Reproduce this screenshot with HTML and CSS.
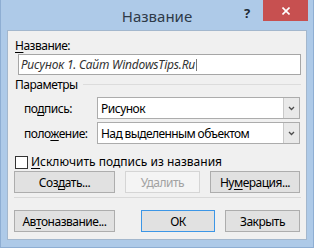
FILE: index.html
```html
<!DOCTYPE html>
<html lang="ru">
<head>
<meta charset="utf-8">
<title>Название</title>
<link rel="stylesheet" href="styles.css">
</head>
<body>
<div class="window">
  <div class="titlebar">
    <div class="title">Название</div>
    <div class="controls">
      <div class="help">?</div>
      <div class="close">
        <svg width="8" height="8" viewBox="0 0 8 8"><path d="M0.5 0.5 L7.5 7.5 M7.5 0.5 L0.5 7.5" stroke="#fff" stroke-width="1.6" fill="none"/></svg>
      </div>
    </div>
  </div>
  <div class="panel">
    <div class="lbl-top"><u>Н</u>азвание:</div>
    <div class="input"><span class="itext">Рисунок 1. Сайт WindowsTips.Ru</span><span class="caret"></span></div>
    <div class="group"><span class="group-name">Параметры</span><span class="group-line"></span></div>
    <div class="fields">
      <span class="flabel">по<u>д</u>пись:</span>
      <div class="select"><span class="sval">Рисунок</span><span class="arrow"><svg width="7" height="5" viewBox="0 0 7 5"><path d="M1 1 L3.5 3.5 L6 1" stroke="#4d4d4d" stroke-width="1.3" fill="none"/></svg></span></div>
      <span class="flabel">поло<u>ж</u>ение:</span>
      <div class="select"><span class="sval sval-long">Над выделенным объектом</span><span class="arrow"><svg width="7" height="5" viewBox="0 0 7 5"><path d="M1 1 L3.5 3.5 L6 1" stroke="#4d4d4d" stroke-width="1.3" fill="none"/></svg></span></div>
    </div>
    <div class="check"><span class="box"></span><span class="clabel"><u>И</u>сключить подпись из названия</span></div>
    <div class="row1">
      <div class="btn">Соз<u>д</u>ать...</div>
      <div class="btn disabled">Удалить</div>
      <div class="btn">Ну<u>м</u>ерация...</div>
    </div>
    <div class="sep"></div>
    <div class="row2">
      <div class="btn">Ав<u>т</u>оназвание...</div>
      <div class="btn default">ОК</div>
      <div class="btn">Закрыть</div>
    </div>
  </div>
</div>
</body>
</html>
```
FILE: styles.css
```css
html, body {
  margin: 0;
  padding: 0;
}
body {
  font-family: "Noto Sans", "Open Sans", sans-serif;
  font-size: 12px;
  letter-spacing: -0.5px;
  color: #000;
}
.window {
  width: 314px;
  height: 248px;
  box-sizing: border-box;
  background: #aecae8;
  border: 1px solid #8eaed3;
  border-top: none;
  display: flex;
  flex-direction: column;
  padding: 0 6px 7px 6px;
}
.titlebar {
  height: 30px;
  display: grid;
  grid-template-columns: 1fr auto 1fr;
  margin: 0 -6px;
}
.title {
  grid-column: 2;
  font-size: 15px;
  letter-spacing: 0;
  line-height: 20px;
  padding-top: 6px;
  color: #2e3a48;
}
.controls {
  grid-column: 3;
  justify-self: end;
  display: flex;
  align-items: flex-start;
  padding-right: 5px;
}
.help {
  width: 16px;
  margin-right: 8px;
  text-align: center;
  font-weight: bold;
  font-size: 13px;
  letter-spacing: 0;
  line-height: 16px;
  padding-top: 5px;
  color: #1e2a36;
}
.close {
  width: 45px;
  height: 21px;
  background: #c75050;
  display: flex;
  align-items: center;
  justify-content: center;
}
.panel {
  flex: 1;
  background: #f0f0f0;
  border: 1px solid #a3b7cd;
  padding: 7px 5px 0 6px;
  display: flex;
  flex-direction: column;
}
u {
  text-decoration: underline;
  text-underline-offset: 2px;
}
.lbl-top {
  line-height: 15px;
  margin-left: 1px;
}
.input {
  margin: 1px 0 0 4px;
  height: 21px;
  box-sizing: border-box;
  border: 1px solid #a6a6a6;
  background: #fff;
  display: flex;
  align-items: center;
  padding-left: 2px;
}
.itext {
  font-style: italic;
  letter-spacing: -0.2px;
  color: #333;
}
.caret {
  width: 1px;
  height: 12px;
  background: #777;
  margin-left: 1px;
}
.group {
  margin-top: 2px;
  display: flex;
  align-items: center;
  line-height: 15px;
  margin-left: 1px;
}
.group-line {
  flex: 1;
  height: 1px;
  background: #dcdcdc;
  margin-left: 5px;
  margin-top: -1px;
}
.fields {
  margin-top: 5px;
  display: grid;
  grid-template-columns: 83px 203px;
  grid-auto-rows: 22px;
  row-gap: 3px;
  align-items: center;
}
.flabel {
  padding-left: 10px;
}
.select {
  height: 22px;
  box-sizing: border-box;
  border: 1px solid #acacac;
  background: #fff;
  display: flex;
  align-items: center;
}
.sval {
  flex: 1;
  padding-left: 3px;
}
.sval-long {
  letter-spacing: -0.6px;
}
.arrow {
  width: 16px;
  height: 20px;
  box-sizing: border-box;
  border-left: 1px solid #c9c9c9;
  background: #e9e9e9;
  display: flex;
  align-items: center;
  justify-content: center;
}
.check {
  margin-top: 12px;
  margin-left: 1px;
  display: flex;
  align-items: center;
  height: 13px;
}
.box {
  width: 13px;
  height: 13px;
  box-sizing: border-box;
  border: 1px solid #333;
  background: #fff;
}
.clabel {
  margin-left: 3px;
  margin-top: -2px;
  letter-spacing: 0;
}
.row1, .row2 {
  display: flex;
  height: 22px;
}
.row1 {
  margin-top: 2px;
}
.row2 {
  margin-top: 12px;
}
.btn {
  height: 22px;
  box-sizing: border-box;
  border: 1px solid #adadad;
  background: #e1e1e1;
  display: flex;
  align-items: center;
  justify-content: center;
}
.row1 .btn:nth-child(1) { width: 101px; }
.row1 .btn:nth-child(2) { width: 75px; margin-left: 10px; }
.row1 .btn:nth-child(3) { width: 90px; margin-left: 10px; }
.row2 .btn:nth-child(1) { width: 101px; }
.row2 .btn:nth-child(2) { width: 74px; margin-left: 26px; }
.row2 .btn:nth-child(3) { width: 75px; margin-left: 10px; }
.btn.disabled {
  border-color: #d5d5d5;
  background: #f4f4f4;
  color: #a2a2a2;
}
.btn.default {
  border-color: #3c96e6;
}
.sep {
  margin-top: 4px;
  height: 1px;
  background: #d9d9d9;
}
```
